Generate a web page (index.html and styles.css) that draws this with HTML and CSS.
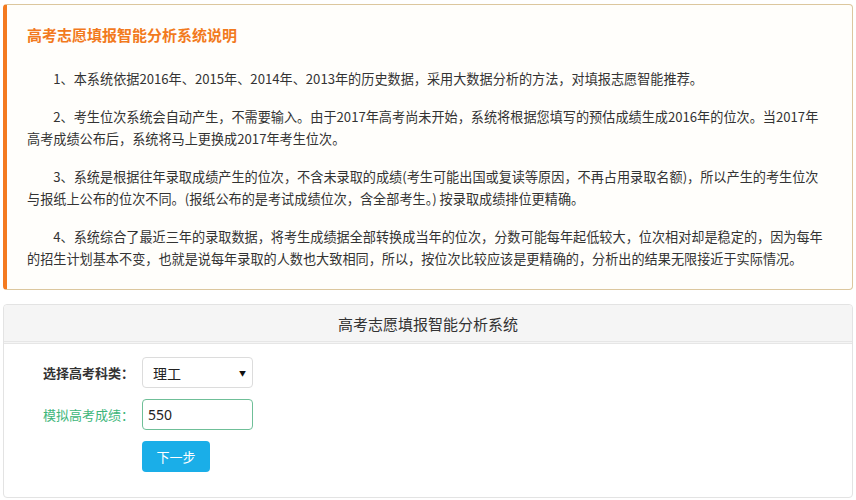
FILE: index.html
```html
<!DOCTYPE html>
<html lang="zh-CN">
<head>
<meta charset="UTF-8">
<meta name="viewport" content="width=device-width, initial-scale=1.0">
<title>高考志愿填报智能分析系统</title>
<link rel="stylesheet" href="styles.css">
</head>
<body>

  <div class="notice">
    <h3 class="notice-title">高考志愿填报智能分析系统说明</h3>
    <p>1、本系统依据2016年、2015年、2014年、2013年的历史数据，采用大数据分析的方法，对填报志愿智能推荐。</p>
    <p>2、考生位次系统会自动产生，不需要输入。由于2017年高考尚未开始，系统将根据您填写的预估成绩生成2016年的位次。当2017年高考成绩公布后，系统将马上更换成2017年考生位次。</p>
    <p>3、系统是根据往年录取成绩产生的位次，不含未录取的成绩(考生可能出国或复读等原因，不再占用录取名额)，所以产生的考生位次与报纸上公布的位次不同。(报纸公布的是考试成绩位次，含全部考生。) 按录取成绩排位更精确。</p>
    <p>4、系统综合了最近三年的录取数据，将考生成绩据全部转换成当年的位次，分数可能每年起低较大，位次相对却是稳定的，因为每年的招生计划基本不变，也就是说每年录取的人数也大致相同，所以，按位次比较应该是更精确的，分析出的结果无限接近于实际情况。</p>
  </div>

  <div class="panel">
    <div class="panel-heading">高考志愿填报智能分析系统</div>
    <div class="panel-body">
      <div class="form-row">
        <label class="form-label">选择高考科类：</label>
        <div class="select-box">
          <span>理工</span>
          <span class="caret">&#9660;</span>
        </div>
      </div>
      <div class="form-row">
        <label class="form-label label-success">模拟高考成绩：</label>
        <input class="score-input" type="text" value="550">
      </div>
      <div class="form-row">
        <span class="form-label"></span>
        <button class="btn-next">下一步</button>
      </div>
    </div>
  </div>

</body>
</html>
```

FILE: styles.css
```css
  body {
    margin: 0;
    padding: 4px 3px;
    font-family: "Noto Sans CJK SC", "Liberation Sans", sans-serif;
    font-size: 13px;
    color: #333;
    background: #fff;
  }
  .notice {
    border: 1px solid #dcc79e;
    border-left: 4px solid #f47a20;
    border-radius: 4px;
    background: #fffefb;
    padding: 19px 25px 19px 20px;
  }
  .notice-title {
    margin: 0 0 22px;
    font-size: 15px;
    line-height: 22px;
    font-weight: bold;
    color: #f27a1d;
  }
  .notice p {
    margin: 0 0 16px;
    font-size: 13.15px;
    line-height: 22px;
    text-indent: 2em;
  }
  .notice p:last-child {
    margin-bottom: 0;
  }

  .panel {
    margin-top: 14px;
    border: 1px solid #e3e3e3;
    border-radius: 4px;
    background: #fff;
  }
  .panel-heading {
    height: 36px;
    line-height: 38px;
    text-align: center;
    font-size: 15px;
    color: #333;
    background: #f5f5f5;
    border-bottom: 3px double #e6e6e6;
    border-radius: 4px 4px 0 0;
  }
  .panel-body {
    padding: 13px 0 25px 39px;
    display: flex;
    flex-direction: column;
    gap: 11px;
  }
  .form-row {
    display: flex;
    align-items: center;
  }
  .form-label {
    width: 99px;
    font-weight: bold;
    color: #333;
  }
  .label-success {
    font-weight: normal;
    color: #3db67a;
  }
  .select-box {
    box-sizing: border-box;
    width: 111px;
    height: 31px;
    padding: 0 6px 0 10px;
    border: 1px solid #dcdcdc;
    border-radius: 4px;
    display: flex;
    align-items: center;
    justify-content: space-between;
    font-size: 14px;
    color: #222;
  }
  .caret {
    font-size: 7px;
    color: #111;
  }
  .score-input {
    box-sizing: border-box;
    width: 111px;
    height: 31px;
    margin: 0;
    padding: 0 5px;
    border: 1px solid #6fbf98;
    border-radius: 4px;
    font-family: "Noto Sans", "Liberation Sans", sans-serif;
    font-size: 14px;
    color: #222;
  }
  .btn-next {
    width: 68px;
    height: 31px;
    border: none;
    border-radius: 4px;
    background: #1aaee8;
    color: #fff;
    font-family: "Noto Sans CJK SC", sans-serif;
    font-size: 13px;
    cursor: pointer;
  }
```
